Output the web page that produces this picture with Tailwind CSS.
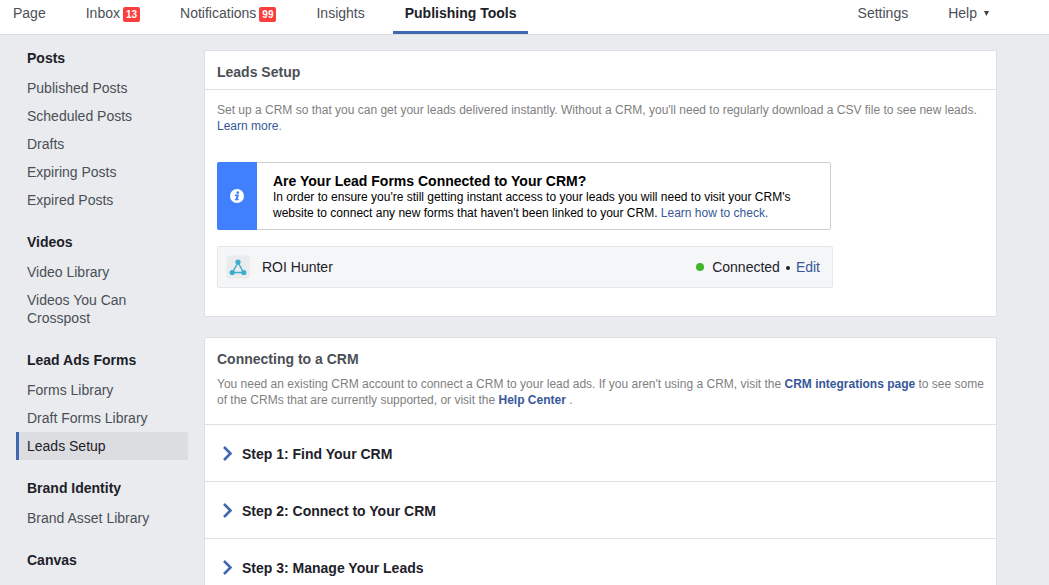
<!DOCTYPE html>
<html lang="en">
  <head>
    <meta charset="UTF-8" />
    <meta name="viewport" content="width=device-width, initial-scale=1.0" />
    <title>Publishing Tools</title>
    <script src="https://cdn.jsdelivr.net/npm/@tailwindcss/browser@4"></script>
    <style>
      body {
        font-family: 'Liberation Sans', Arial, Helvetica, sans-serif;
      }
    </style>
  </head>
  <body class="h-screen overflow-hidden flex flex-col bg-[#e9ebee] text-sm text-[#4b4f56]">
    <!-- Top Navigation -->
    <header class="flex justify-between shrink-0 bg-white border-b border-[#dadde1] pl-px pr-12">
      <nav class="flex gap-4">
        <a href="#" class="px-3 pt-1 pb-2 leading-[19px] border-b-3 border-transparent">Page</a>
        <a href="#" class="flex gap-[3px] px-3 pt-1 pb-2 leading-[19px] border-b-3 border-transparent">
          Inbox
          <span class="mt-[3px] h-[15px] px-[3px] rounded-xs bg-[#fa3e3e] text-white text-[10px] font-bold leading-[15px]">13</span>
        </a>
        <a href="#" class="flex gap-[3px] px-3 pt-1 pb-2 leading-[19px] border-b-3 border-transparent">
          Notifications
          <span class="mt-[3px] h-[15px] px-[3px] rounded-xs bg-[#fa3e3e] text-white text-[10px] font-bold leading-[15px]">99</span>
        </a>
        <a href="#" class="px-3 pt-1 pb-2 leading-[19px] border-b-3 border-transparent">Insights</a>
        <a href="#" class="px-3 pt-1 pb-2 leading-[19px] border-b-3 border-[#4267b2] font-bold text-[#1d2129]">Publishing Tools</a>
      </nav>
      <nav class="flex gap-4">
        <a href="#" class="px-3 pt-1 pb-2 leading-[19px]">Settings</a>
        <button type="button" class="flex gap-[7px] px-3 pt-1 pb-2 leading-[19px]">
          Help
          <svg class="w-[5px] h-[5px] mt-[7px]" viewBox="0 0 5 5" fill="#3b3f46"><path d="M0 0h5L2.5 5z" /></svg>
        </button>
      </nav>
    </header>

    <div class="flex flex-1 min-h-0 gap-4 pl-4 pr-[52px]">
      <!-- Sidebar -->
      <nav class="w-[172px] shrink-0 flex flex-col gap-[14px] pt-[9px] leading-[18px]">
        <section>
          <h2 class="mb-0.5 px-[11px] py-[5px] font-bold text-[#1d2129]">Posts</h2>
          <a href="#" class="block px-[11px] py-[5px]">Published Posts</a>
          <a href="#" class="block px-[11px] py-[5px]">Scheduled Posts</a>
          <a href="#" class="block px-[11px] py-[5px]">Drafts</a>
          <a href="#" class="block px-[11px] py-[5px]">Expiring Posts</a>
          <a href="#" class="block px-[11px] py-[5px]">Expired Posts</a>
        </section>
        <section>
          <h2 class="mb-0.5 px-[11px] py-[5px] font-bold text-[#1d2129]">Videos</h2>
          <a href="#" class="block px-[11px] py-[5px]">Video Library</a>
          <a href="#" class="block px-[11px] py-[5px]">Videos You Can<br />Crosspost</a>
        </section>
        <section>
          <h2 class="mb-0.5 px-[11px] py-[5px] font-bold text-[#1d2129]">Lead Ads Forms</h2>
          <a href="#" class="block px-[11px] py-[5px]">Forms Library</a>
          <a href="#" class="block px-[11px] py-[5px]">Draft Forms Library</a>
          <a href="#" class="block pl-2 pr-[11px] py-[5px] border-l-3 border-[#4267b2] bg-[#dcdde1] text-[#1d2129]">Leads Setup</a>
        </section>
        <section>
          <h2 class="mb-0.5 px-[11px] py-[5px] font-bold text-[#1d2129]">Brand Identity</h2>
          <a href="#" class="block px-[11px] py-[5px]">Brand Asset Library</a>
        </section>
        <section>
          <h2 class="mb-0.5 px-[11px] py-[5px] font-bold text-[#1d2129]">Canvas</h2>
        </section>
      </nav>

      <main class="flex-1 min-w-0 flex flex-col gap-5 pt-[15px]">
        <!-- Leads Setup -->
        <section class="shrink-0 bg-white border border-[#dddfe2] rounded-xs">
          <h1 class="px-3 pt-3 pb-2 leading-[18px] font-bold border-b border-[#dddfe2]">Leads Setup</h1>
          <div class="px-3 pt-3 pb-7">
            <p class="text-xs text-[#7f7f7f]">
              Set up a CRM so that you can get your leads delivered instantly. Without a CRM, you'll need to regularly download a CSV file to see new leads.
              <a href="#" class="text-[#365899]">Learn more</a>.
            </p>

            <div class="mt-7 flex max-w-[614px] border border-[#ccced2] rounded-xs">
              <div class="-my-px -ml-px w-10 shrink-0 flex items-center justify-center bg-[#4080ff] rounded-l-xs">
                <svg class="w-[14px] h-[14px]" viewBox="0 0 14 14">
                  <circle cx="7" cy="7" r="7" fill="#fff" />
                  <circle cx="7.8" cy="3.6" r="1.4" fill="#4080ff" />
                  <path d="M5 5.6h3.9l-1 4.3h.9l-.3 1.3H4.6l.3-1.3h.8l.7-3H4.7z" fill="#4080ff" />
                </svg>
              </div>
              <div class="px-4 pt-[10px] pb-2 text-xs text-black">
                <h2 class="text-sm leading-4 font-bold">Are Your Lead Forms Connected to Your CRM?</h2>
                <p>
                  In order to ensure you're still getting instant access to your leads you will need to visit your CRM's website to connect any new forms that haven't been linked to your CRM.
                  <a href="#" class="text-[#365899]">Learn how to check.</a>
                </p>
              </div>
            </div>

            <div class="mt-4 flex items-center max-w-[616px] h-[42px] pl-2 pr-3 bg-[#f5f6f7] border border-[#e5e7ea] rounded-xs text-[#1d2129]">
              <svg class="w-6 h-6 mr-3" viewBox="0 0 24 24">
                <rect x="0.5" y="0.5" width="23" height="23" rx="2" fill="#e9ebee" />
                <path d="M12 7.5 6.5 17.5h11z" fill="none" stroke="#3baecb" stroke-width="1.4" />
                <circle cx="12" cy="7" r="2.6" fill="#3baecb" />
                <circle cx="6.2" cy="17.5" r="2.6" fill="#3baecb" />
                <circle cx="17.8" cy="17.5" r="2.6" fill="#3baecb" />
              </svg>
              <span>ROI Hunter</span>
              <span class="ml-auto mr-2 w-2 h-2 rounded-full bg-[#42b72a]"></span>
              <span>Connected</span>
              <span class="mx-[6px] w-1 h-1 mt-0.5 rounded-full bg-[#1d2129]"></span>
              <a href="#" class="text-[#365899]">Edit</a>
            </div>
          </div>
        </section>

        <!-- Connecting to a CRM -->
        <section class="shrink-0 bg-white border border-[#dddfe2] rounded-xs">
          <div class="px-3 pt-3 pb-4">
            <h1 class="leading-[18px] font-bold">Connecting to a CRM</h1>
            <p class="mt-2 text-xs text-[#7f7f7f]">
              You need an existing CRM account to connect a CRM to your lead ads. If you aren't using a CRM, visit the
              <a href="#" class="font-bold text-[#365899]">CRM integrations page</a> to see some of the CRMs that are currently supported, or visit the
              <a href="#" class="font-bold text-[#365899]">Help Center</a> .
            </p>
          </div>
          <button type="button" class="w-full h-[57px] flex items-center gap-[9px] px-[18px] pt-px border-t border-[#dddfe2] font-bold text-[#1d2129]">
            <svg class="w-[10px] h-4" viewBox="0 0 10 16" fill="none" stroke="#4267b2" stroke-width="2.6"><path d="M1 1l6.5 6.5L1 14" /></svg>
            Step 1: Find Your CRM
          </button>
          <button type="button" class="w-full h-[57px] flex items-center gap-[9px] px-[18px] pt-px border-t border-[#dddfe2] font-bold text-[#1d2129]">
            <svg class="w-[10px] h-4" viewBox="0 0 10 16" fill="none" stroke="#4267b2" stroke-width="2.6"><path d="M1 1l6.5 6.5L1 14" /></svg>
            Step 2: Connect to Your CRM
          </button>
          <button type="button" class="w-full h-[57px] flex items-center gap-[9px] px-[18px] pt-px border-t border-[#dddfe2] font-bold text-[#1d2129]">
            <svg class="w-[10px] h-4" viewBox="0 0 10 16" fill="none" stroke="#4267b2" stroke-width="2.6"><path d="M1 1l6.5 6.5L1 14" /></svg>
            Step 3: Manage Your Leads
          </button>
        </section>
      </main>
    </div>
  </body>
</html>
